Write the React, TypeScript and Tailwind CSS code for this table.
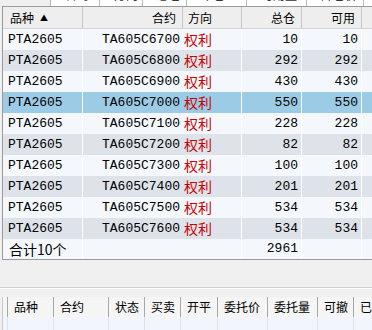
import React from 'react';

type Row = { variety: string; contract: string; dir: string; total: number; avail: number };

const qty = [10, 292, 430, 550, 228, 82, 100, 201, 534, 534];

const rows: Row[] = [6700, 6800, 6900, 7000, 7100, 7200, 7300, 7400, 7500, 7600].map((strike, i) => ({
  variety: 'PTA2605',
  contract: `TA605C${strike}`,
  dir: '权利',
  total: qty[i],
  avail: qty[i],
}));

const SELECTED = 3;
const mono = "font-['Liberation_Mono',monospace] text-[13px]";
const cjk = "font-['Noto_Sans_CJK_SC',sans-serif]";

const topCells = [
  { w: 'w-[49px]', t: '合约' },
  { w: 'w-[43px]', t: '方向' },
  { w: 'w-[44px]', t: '总仓' },
  { w: 'w-[60px]', t: '今仓' },
  { w: 'w-[60px]', t: '可用量' },
  { w: 'w-[57px]', t: '开仓价' },
];

const orderCols = [
  { w: 'w-[46px]', t: '品种' },
  { w: 'w-[55px]', t: '合约' },
  { w: 'w-[36px]', t: '状态' },
  { w: 'w-[36px]', t: '买卖' },
  { w: 'w-[37px]', t: '开平' },
  { w: 'w-[50px]', t: '委托价' },
  { w: 'w-[50px]', t: '委托量' },
  { w: 'w-[36px]', t: '可撤' },
  { w: 'w-[40px]', t: '已成交' },
];

export default function App() {
  return (
    <div className={`w-[372px] h-[330px] overflow-hidden bg-[#f0f0f0] ${cjk} text-black`}>
      {/* bottom edge of the panel above, scrolled mostly out of view */}
      <div className="h-[6px] flex overflow-hidden">
        <div className="w-[50px] shrink-0" />
        {topCells.map(c => (
          <div key={c.t} className={`${c.w} shrink-0 bg-white border-l border-[#b8b8b8] overflow-hidden`}>
            <div className="mt-[-12px] leading-[14px] text-[12px] text-[#333] pl-[14px] whitespace-nowrap">{c.t}</div>
          </div>
        ))}
        <div className="flex-1 bg-white border-l border-[#b8b8b8]" />
      </div>

      {/* positions table */}
      <div className="ml-[2px] border-l border-t border-b border-[#9a9a9a] bg-[#f4f8fd]">
        <div className="h-[22px] flex bg-[#eeeeee] border-b border-[#d4d4d4] text-[12px] leading-[22px]">
          <div className="w-[80px] shrink-0 border-r border-[#c4c4c4] pl-[7px] flex items-center gap-[6px]">
            <span>品种</span><span className="text-[8px]">▲</span>
          </div>
          <div className="w-[100px] shrink-0 border-r border-[#c4c4c4] text-right pr-[6px]">合约</div>
          <div className="w-[59px] shrink-0 border-r border-[#c4c4c4] pl-[5px]">方向</div>
          <div className="w-[60px] shrink-0 border-r border-[#c4c4c4] text-right pr-[6px]">总仓</div>
          <div className="w-[60px] shrink-0 border-r border-[#c4c4c4] text-right pr-[6px]">可用</div>
          <div className="flex-1" />
        </div>
        {rows.map((r, i) => {
          const bg = i === SELECTED ? 'bg-[#9ccbe6]' : i % 2 === 0 ? 'bg-[#f4f8fd]' : 'bg-[#dee3ea]';
          return (
            <div key={r.contract} className={`h-[21px] flex ${bg} leading-[21px]`}>
              <div className={`w-[80px] shrink-0 border-r border-white pl-[5px] ${mono}`}>{r.variety}</div>
              <div className={`w-[100px] shrink-0 text-right pr-[3px] ${mono}`}>{r.contract}</div>
              <div className="w-[59px] shrink-0 border-r border-white pl-[1px] text-[14px] text-[#c80000]">{r.dir}</div>
              <div className={`w-[60px] shrink-0 border-r border-white text-right pr-[3px] ${mono}`}>{r.total}</div>
              <div className={`w-[60px] shrink-0 border-r border-white text-right pr-[3px] ${mono}`}>{r.avail}</div>
              <div className="flex-1" />
            </div>
          );
        })}
        <div className="h-[20px] flex bg-[#f4f8fd] leading-[20px]">
          <div className="w-[80px] shrink-0 border-r border-white pl-[6px] text-[14px]">合计10个</div>
          <div className="w-[100px] shrink-0" />
          <div className="w-[59px] shrink-0 border-r border-white" />
          <div className={`w-[60px] shrink-0 border-r border-white text-right pr-[3px] ${mono}`}>2961</div>
          <div className="w-[60px] shrink-0 border-r border-white" />
          <div className="flex-1" />
        </div>
      </div>

      <div className="h-[27px]" />
      <div className="h-[1px] bg-[#cfcfcf]" />
      <div className="h-[1px] bg-white" />
      <div className="h-[8px]" />

      {/* orders table */}
      <div className="ml-[2px] border-l border-[#c8c8c8] bg-[#f2f6fc]">
        <div className="h-[20px] flex bg-[#f5f5f5] text-[12px] leading-[20px]">
          <div className="w-[5px] shrink-0 border-r border-[#a8a8a8]" />
          {orderCols.map(c => (
            <div key={c.t} className={`${c.w} shrink-0 border-r border-[#a8a8a8] pl-[6px] whitespace-nowrap overflow-hidden`}>{c.t}</div>
          ))}
        </div>
        <div className="h-[20px] flex">
          <div className="w-[5px] shrink-0 border-r border-[#dde3ec]" />
          {orderCols.map(c => (
            <div key={c.t} className={`${c.w} shrink-0 border-r border-[#dde3ec]`} />
          ))}
        </div>
      </div>
    </div>
  );
}
